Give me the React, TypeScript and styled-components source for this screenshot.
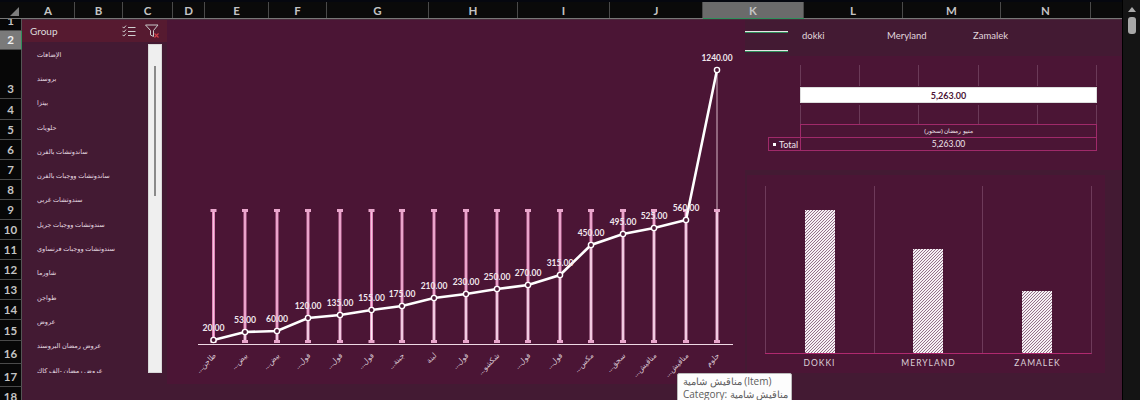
import React from 'react'
import styled, { createGlobalStyle } from 'styled-components'

const GlobalStyle = createGlobalStyle`
  html, body {
    margin: 0;
    padding: 0;
    width: 1140px;
    height: 400px;
    overflow: hidden;
    background: #05070f;
  }
  * { box-sizing: border-box; }
`

const columns = [
  ['A', 53], ['B', 48], ['C', 50], ['D', 32], ['E', 64], ['F', 58], ['G', 102],
  ['H', 89], ['I', 92], ['J', 93], ['K', 101], ['L', 99], ['M', 98], ['N', 90], ['', 31],
] as const

const rows = [
  ['1', 12], ['2', 19], ['3', 49], ['4', 21], ['5', 20], ['6', 20], ['7', 20], ['8', 20], ['9', 20],
  ['10', 20], ['11', 20], ['12', 20], ['13', 20], ['14', 20], ['15', 21], ['16', 23], ['17', 23], ['18', 20],
] as const

const groups = [
  'الإضافات', 'بروستد', 'بيتزا', 'حلويات', 'ساندوتشات بالفرن', 'ساندوتشات ووجبات بالفرن',
  'سندوتشات غربي', 'سندوتشات ووجبات جريل', 'سندوتشات ووجبات فرنساوي', 'شاورما', 'طواجن',
  'عروض', 'عروض رمضان البروستد', 'عروض رمضان -الف كاك',
]

const points = [
  { x: 213.5, y: 340, v: '20.00', c: 'طاجن…' },
  { x: 245, y: 332, v: '53.00', c: 'بيض…' },
  { x: 277, y: 331, v: '60.00', c: 'بيض…' },
  { x: 308, y: 318, v: '120.00', c: 'فول…' },
  { x: 340, y: 315, v: '135.00', c: 'فول…' },
  { x: 371.5, y: 310, v: '155.00', c: 'فول…' },
  { x: 402, y: 306, v: '175.00', c: 'جبنة…' },
  { x: 434, y: 298, v: '210.00', c: 'لبنة' },
  { x: 466, y: 294, v: '230.00', c: 'فول…' },
  { x: 497, y: 289, v: '250.00', c: 'شكشو…' },
  { x: 528, y: 285, v: '270.00', c: 'فول…' },
  { x: 560, y: 275, v: '315.00', c: 'فول…' },
  { x: 591, y: 245, v: '450.00', c: 'مكس…' },
  { x: 623, y: 234, v: '495.00', c: 'سجق…' },
  { x: 654, y: 228, v: '525.00', c: 'مناقيش…' },
  { x: 686, y: 220, v: '560.00', c: 'مناقيش…' },
  { x: 717, y: 70, v: '1240.00', c: 'حلوم' },
]

const branches = [
  { name: 'DOKKI', height: 143 },
  { name: 'MERYLAND', height: 104 },
  { name: 'ZAMALEK', height: 62 },
]

const Page = styled.div`
  width: 1140px;
  height: 400px;
  display: flex;
  overflow: hidden;
  position: relative;
  font-family: 'Lato', 'Open Sans', sans-serif;
`
const Main = styled.div`
  width: 1122px;
  padding-top: 2px;
`
const ColumnBar = styled.div`
  display: flex;
  height: 17px;
  background: #0a0a0a;
  border-bottom: 1px solid #777;
`
const Corner = styled.div`
  width: 22px;
  position: relative;
  overflow: hidden;
  &::after {
    content: '';
    position: absolute;
    right: 3px;
    bottom: 2px;
    border-style: solid;
    border-width: 0 0 9px 9px;
    border-color: transparent transparent #7d7d7d transparent;
  }
`
const ColumnCell = styled.div<{ $w: number; $active?: boolean; $blank?: boolean }>`
  width: ${p => p.$w}px;
  display: flex;
  align-items: center;
  justify-content: center;
  font-size: 11.5px;
  font-weight: 700;
  color: #c4c4c4;
  background: ${p => (p.$active ? '#6b6b6b' : 'transparent')};
  border-right: ${p => (p.$blank ? 'none' : '1px solid #4a4a4a')};
  box-shadow: ${p => (p.$active ? '0 1px 0 #2f8f5b' : 'none')};
`
const Body = styled.div`
  display: flex;
  height: 381px;
`
const RowBar = styled.div`
  width: 22px;
  height: 381px;
  background: #070707;
  overflow: hidden;
`
const RowCell = styled.div<{ $h: number; $active?: boolean }>`
  height: ${p => p.$h}px;
  display: flex;
  align-items: flex-end;
  justify-content: center;
  padding-bottom: 2px;
  overflow: hidden;
  font-size: 11.5px;
  font-weight: 700;
  line-height: 15px;
  color: ${p => (p.$active ? '#f0f0f0' : '#c4c4c4')};
  background: ${p => (p.$active ? '#7a7a7a' : 'transparent')};
  border-bottom: 1px solid #4a4a4a;
  border-right: 1px solid ${p => (p.$active ? '#2f8f5b' : '#555')};
`
const Sheet = styled.div`
  width: 1100px;
  display: flex;
  align-items: flex-start;
  background: #431a33;
  border-top: 1px solid #4a2a3c;
`
const Slicer = styled.div`
  width: 145px;
  height: 380px;
  flex: none;
`
const SlicerHeader = styled.div`
  height: 22px;
  display: flex;
  align-items: center;
  padding: 0 8px;
  background: #561a30;
  color: #dcdcdc;
  font-size: 10px;
`
const SlicerTitle = styled.span`
  flex: 1;
`
const SlicerIcons = styled.div`
  display: flex;
  align-items: center;
  gap: 9px;
`
const SlicerBody = styled.div`
  display: flex;
  height: 331px;
`
const ItemList = styled.div`
  width: 126px;
  padding-left: 15px;
  overflow: hidden;
`
const Item = styled.div`
  height: 24.3px;
  display: flex;
  align-items: center;
  font-family: 'Noto Sans', 'DejaVu Sans', sans-serif;
  font-size: 6.5px;
  color: #e4d9e0;
`
const ScrollTrack = styled.div`
  width: 14px;
  margin-top: 2px;
  background: #efefef;
  border: 1px solid #d8d8d8;
  display: flex;
  justify-content: center;
  padding-top: 21px;
`
const ScrollThumb = styled.div`
  width: 2px;
  height: 130px;
  background: #8a8a8a;
`
const ChartPanel = styled.div`
  width: 578px;
  height: 364px;
  flex: none;
  background: #4b1535;
`
const ChartSvg = styled.svg`
  display: block;
  font-family: 'Lato', 'Open Sans', sans-serif;
`
const RightColumn = styled.div`
  flex: 1;
  display: flex;
  flex-direction: column;
  height: 380px;
`
const BranchSlicer = styled.div`
  height: 36px;
  flex: none;
  display: flex;
  align-items: flex-start;
  font-size: 9.5px;
  line-height: 12px;
  color: #e0d6dc;
`
const BranchSwatch = styled.div`
  width: 43px;
  height: 20px;
  margin: 11px 14px 0 0;
  border-top: 1px solid #e6e6e6;
  border-bottom: 1px solid #e6e6e6;
  box-shadow: inset 0 1px 0 #2f8f5b, 0 1px 0 #2f8f5b;
`
const BranchName = styled.span<{ $w: number }>`
  width: ${p => p.$w}px;
  margin-top: 10px;
`
const Pivot = styled.div`
  height: 114px;
  flex: none;
  display: flex;
  flex-direction: column;
  align-items: flex-end;
  padding: 9px 25px 0 0;
  background: #4b1535;
`
const TickRow = styled.div<{ $h: number }>`
  width: 297px;
  height: ${p => p.$h}px;
  flex: none;
  display: grid;
  grid-template-columns: repeat(5, 1fr);
  border-right: 1px solid #6b3a58;
`
const Tick = styled.div`
  border-left: 1px solid #6b3a58;
`
const TotalBar = styled.div`
  width: 297px;
  height: 16px;
  flex: none;
  margin: 1px 0 2px;
  background: #fff;
  border: 1px solid #ddd;
  color: #4b1535;
  font-size: 9px;
  font-weight: 700;
  display: flex;
  align-items: center;
  justify-content: center;
`
const PivotHead = styled.div`
  width: 297px;
  height: 14px;
  flex: none;
  border: 1px solid #a02a6a;
  color: #f0e6ec;
  font-family: 'Noto Sans', sans-serif;
  font-size: 6px;
  display: flex;
  align-items: center;
  justify-content: center;
`
const PivotRow = styled.div`
  display: flex;
  height: 14px;
  flex: none;
  margin-top: -1px;
  color: #f0e6ec;
  font-size: 8.5px;
`
const PivotLabel = styled.div`
  width: 32px;
  border: 1px solid #a02a6a;
  border-right: none;
  display: flex;
  align-items: center;
  gap: 3px;
  padding-left: 4px;
  white-space: nowrap;
  font-size: 9px;
  &::before {
    content: '';
    width: 3px;
    height: 3px;
    background: #fff;
  }
`
const PivotValue = styled.div`
  width: 297px;
  border: 1px solid #a02a6a;
  display: flex;
  align-items: center;
  justify-content: center;
`
const BarPanel = styled.div`
  width: 358px;
  height: 198px;
  margin: 5px 0 0 2px;
  padding: 11px 13px 0 18px;
  background: #4b1535;
`
const BarPlot = styled.div`
  height: 168px;
  display: grid;
  grid-template-columns: repeat(3, 1fr);
  border-right: 1px solid #6e3a5a;
  border-bottom: 1px solid #b0296f;
`
const BarCell = styled.div`
  border-left: 1px solid #6e3a5a;
  display: flex;
  align-items: flex-end;
  justify-content: center;
`
const Bar = styled.div<{ $h: number }>`
  width: 30px;
  height: ${p => p.$h}px;
  background: repeating-linear-gradient(135deg, #f6f0f4 0 1.3px, #94708a 1.3px 2.12px);
`
const BarLabels = styled.div`
  display: grid;
  grid-template-columns: repeat(3, 1fr);
  padding-top: 3px;
`
const BarLabel = styled.div`
  text-align: center;
  font-size: 8.5px;
  line-height: 12px;
  letter-spacing: 1px;
  color: #dcd0d8;
`
const ScrollBar = styled.div`
  width: 18px;
  background: #141414;
  display: flex;
  flex-direction: column;
  align-items: center;
  border-left: 1px solid #000;
`
const ArrowUp = styled.div`
  margin-top: 7px;
  border-style: solid;
  border-width: 0 4px 5px 4px;
  border-color: transparent transparent #aaa transparent;
`
const Thumb = styled.div`
  width: 8px;
  height: 17px;
  margin-top: 5px;
  border-radius: 3px;
  background: #a8a8a8;
`
const Tooltip = styled.div`
  position: absolute;
  left: 677px;
  top: 373px;
  width: 115px;
  height: 40px;
  padding: 1px 5px;
  background: #fdfdfd;
  border: 1px solid #bbb;
  border-radius: 2px 2px 0 0;
  color: #5c5c5c;
  font-family: 'Open Sans', 'Noto Sans', sans-serif;
  font-size: 10px;
  line-height: 12.5px;
  white-space: nowrap;
`

const line = points.map(p => `${p.x},${p.y}`).join(' ')

function ChecklistIcon() {
  return (
    <svg width="14" height="13" viewBox="0 0 14 13" fill="none" stroke="#cfcfcf" strokeWidth="1">
      <path d="M.5 1.8l1.3 1.3L4 .6M.5 5.8l1.3 1.3L4 4.6M.5 9.8l1.3 1.3L4 8.6" />
      <path d="M6 2.5h7.5M6 6.5h7.5M6 10.5h7.5" />
    </svg>
  )
}

function ClearFilterIcon() {
  return (
    <svg width="14" height="14" viewBox="0 0 14 14" fill="none">
      <path d="M.5 1h12.5L8.5 6.5v6L5.5 11V6.5z" stroke="#c8c8c8" strokeWidth="1" />
      <path d="M9.5 9.5l4 4M13.5 9.5l-4 4" stroke="#d04048" strokeWidth="1.1" />
    </svg>
  )
}

export default function App() {
  return (
    <Page>
      <GlobalStyle />
      <Main>
        <ColumnBar>
          <Corner />
          {columns.map(([name, w], i) => (
            <ColumnCell key={i} $w={w} $active={name === 'K'} $blank={name === ''}>{name}</ColumnCell>
          ))}
        </ColumnBar>
        <Body>
          <RowBar>
            {rows.map(([name, h]) => (
              <RowCell key={name} $h={h} $active={name === '2'}>{name}</RowCell>
            ))}
          </RowBar>
          <Sheet>
            <Slicer>
              <SlicerHeader>
                <SlicerTitle>Group</SlicerTitle>
                <SlicerIcons>
                  <ChecklistIcon />
                  <ClearFilterIcon />
                </SlicerIcons>
              </SlicerHeader>
              <SlicerBody>
                <ItemList>
                  {groups.map(g => <Item key={g}>{g}</Item>)}
                </ItemList>
                <ScrollTrack><ScrollThumb /></ScrollTrack>
              </SlicerBody>
            </Slicer>
            <ChartPanel>
              <ChartSvg width="578" height="364" viewBox="167 20 578 364">
                {points.map(p => (
                  <g key={p.x}>
                    <rect x={p.x - 1.5} y={210} width={3} height={Math.max(p.y - 210, 0)} fill="#e083b8" />
                    <rect x={p.x - 0.5} y={210} width={1} height={Math.max(p.y - 210, 0)} fill="#f3c6de" />
                    <rect x={p.x - 1.5} y={Math.max(p.y, 210)} width={3} height={342 - Math.max(p.y, 210)} fill="#e8a6cc" />
                    <rect x={p.x - 0.5} y={Math.max(p.y, 210)} width={1} height={342 - Math.max(p.y, 210)} fill="#fbeef5" />
                    <rect x={p.x - 3} y={209} width={6} height={3} fill="#e9a6cc" />
                    <rect x={p.x - 3} y={340} width={6} height={3} fill="#e9a6cc" />
                  </g>
                ))}
                <line x1={717} y1={70} x2={717} y2={210} stroke="#d8b8c8" strokeWidth={1} />
                <line x1={198} y1={344.5} x2={733} y2={344.5} stroke="#eed8e4" strokeWidth={1} />
                <polyline points={line} fill="none" stroke="#fff" strokeWidth={2.6} />
                {points.map(p => (
                  <g key={p.v}>
                    <circle cx={p.x} cy={p.y} r={2.6} fill="#4b1535" stroke="#fff" strokeWidth={1.4} />
                    <text
                      x={p.x}
                      y={p.y - 9}
                      textAnchor="middle"
                      fontSize={10}
                      fontWeight={700}
                      fill="#f0e6ec"
                      textLength={p.v.length * 4.45}
                      lengthAdjust="spacingAndGlyphs"
                    >
                      {p.v}
                    </text>
                    <text
                      x={p.x + 3}
                      y={356}
                      direction="rtl"
                      textAnchor="start"
                      fontSize={7.5}
                      fontFamily="'Noto Sans', 'DejaVu Sans', sans-serif"
                      fill="#d9c6d2"
                      transform={`rotate(-45 ${p.x + 3} 356)`}
                    >
                      {p.c}
                    </text>
                  </g>
                ))}
              </ChartSvg>
            </ChartPanel>
            <RightColumn>
              <BranchSlicer>
                <BranchSwatch />
                <BranchName $w={85}>dokki</BranchName>
                <BranchName $w={86}>Meryland</BranchName>
                <BranchName $w={60}>Zamalek</BranchName>
              </BranchSlicer>
              <Pivot>
                <TickRow $h={21}>{[0, 1, 2, 3, 4].map(i => <Tick key={i} />)}</TickRow>
                <TotalBar>5,263.00</TotalBar>
                <TickRow $h={19}>{[0, 1, 2, 3, 4].map(i => <Tick key={i} />)}</TickRow>
                <PivotHead>منيو رمضان (سحور)</PivotHead>
                <PivotRow>
                  <PivotLabel>Total</PivotLabel>
                  <PivotValue>5,263.00</PivotValue>
                </PivotRow>
              </Pivot>
              <BarPanel>
                <BarPlot>
                  {branches.map(b => (
                    <BarCell key={b.name}><Bar $h={b.height} /></BarCell>
                  ))}
                </BarPlot>
                <BarLabels>
                  {branches.map(b => <BarLabel key={b.name}>{b.name}</BarLabel>)}
                </BarLabels>
              </BarPanel>
            </RightColumn>
          </Sheet>
        </Body>
      </Main>
      <ScrollBar>
        <ArrowUp />
        <Thumb />
      </ScrollBar>
      <Tooltip>
        <div>مناقيش شامية (Item)</div>
        <div>Category: مناقيش شامية</div>
      </Tooltip>
    </Page>
  )
}
